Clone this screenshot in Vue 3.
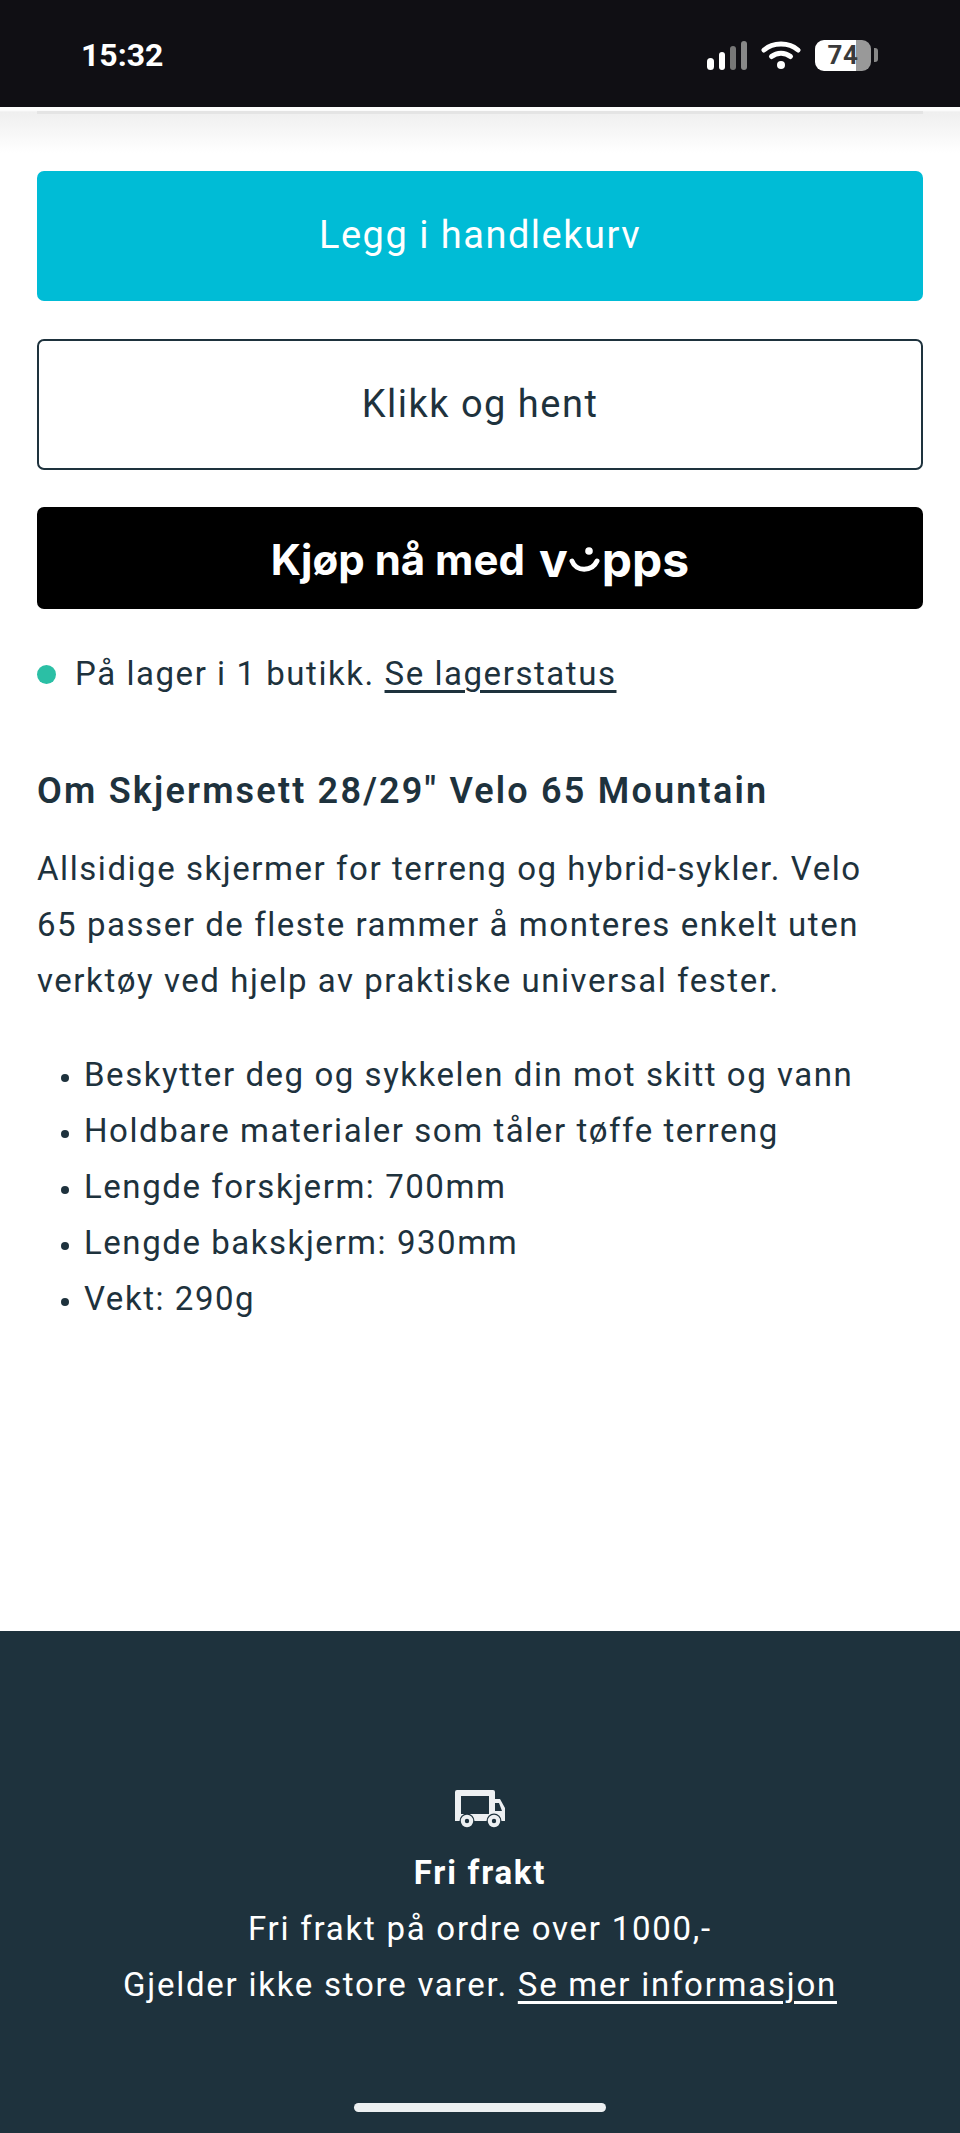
<template>
  <div class="page">
    <header class="status-bar">
      <span class="time">15:32</span>
      <div class="status-icons">
        <svg width="40" height="29" viewBox="0 0 40 29">
          <rect x="0" y="17" width="7" height="12" rx="3.5" fill="#fff" />
          <rect x="12" y="11" width="6" height="18" rx="3" fill="#fff" />
          <rect x="23" y="5" width="6" height="24" rx="3" fill="#777" />
          <rect x="34" y="0" width="6" height="29" rx="3" fill="#888" />
        </svg>
        <svg width="40" height="28" viewBox="0 0 40 28">
          <path d="M3 9C12 1 28 1 37 9" fill="none" stroke="#fff" stroke-width="5" stroke-linecap="round" />
          <path d="M10.5 15.5C16 11 24 11 29.5 15.5" fill="none" stroke="#fff" stroke-width="5" stroke-linecap="round" />
          <circle cx="20" cy="24" r="4" fill="#fff" />
        </svg>
        <div class="battery">
          <div class="battery-body">
            <span>74</span>
          </div>
          <div class="battery-cap"></div>
        </div>
      </div>
    </header>

    <main class="content">
      <button class="btn btn-cart">Legg i handlekurv</button>
      <button class="btn btn-pickup">Klikk og hent</button>
      <button class="btn btn-vipps">
        <span>Kjøp nå med</span>
        <span class="vipps-logo">v<svg class="smile" width="32" height="34" viewBox="0 0 32 34">
          <circle cx="20" cy="8" r="3.8" fill="#fff" />
          <path d="M3 18C7 29 23 29 28 18" fill="none" stroke="#fff" stroke-width="5" stroke-linecap="round" />
        </svg>pps</span>
      </button>

      <p class="stock">
        <span class="dot"></span>
        <span>På lager i 1 butikk. <a href="#">Se lagerstatus</a></span>
      </p>

      <h2 class="title">Om Skjermsett 28/29" Velo 65 Mountain</h2>
      <p class="desc">Allsidige skjermer for terreng og hybrid-sykler. Velo 65 passer de fleste rammer å monteres enkelt uten verktøy ved hjelp av praktiske universal fester.</p>

      <ul class="features">
        <li v-for="item in features" :key="item">{{ item }}</li>
      </ul>
    </main>

    <footer class="footer">
      <svg width="50" height="38" viewBox="0 0 50 38">
        <path fill-rule="evenodd" fill="#edf0f2" d="M2 0H38a2 2 0 0 1 2 2V9H45L50 18V31H0V2A2 2 0 0 1 2 0ZM6 6V24H34V6ZM40 13V21H47L44 13Z" />
        <circle cx="12" cy="31" r="7.5" fill="#1e323d" />
        <circle cx="39" cy="31" r="7.5" fill="#1e323d" />
        <circle cx="12" cy="31" r="4.2" fill="none" stroke="#edf0f2" stroke-width="4" />
        <circle cx="39" cy="31" r="4.2" fill="none" stroke="#edf0f2" stroke-width="4" />
      </svg>
      <strong class="footer-title">Fri frakt</strong>
      <p>Fri frakt på ordre over 1000,-</p>
      <p>Gjelder ikke store varer. <a href="#">Se mer informasjon</a></p>
      <div class="home-bar"></div>
    </footer>
  </div>
</template>

<script setup>
const features = [
  'Beskytter deg og sykkelen din mot skitt og vann',
  'Holdbare materialer som tåler tøffe terreng',
  'Lengde forskjerm: 700mm',
  'Lengde bakskjerm: 930mm',
  'Vekt: 290g'
]
</script>

<style scoped>
.page {
  width: 960px;
  height: 2133px;
  display: flex;
  flex-direction: column;
  background: #fff;
  color: #1e323d;
  font-family: "Roboto", "Liberation Sans", sans-serif;
  font-size: 33px;
  letter-spacing: 1.55px;
  overflow: hidden;
}

.status-bar {
  height: 107px;
  flex: none;
  display: flex;
  justify-content: space-between;
  align-items: center;
  padding: 3px 82px 0 81px;
  box-sizing: border-box;
  background: #100f14;
  position: relative;
}

.status-bar::after {
  content: "";
  position: absolute;
  top: 100%;
  left: 0;
  right: 0;
  height: 46px;
  background: linear-gradient(180deg, #fff 0, #fff 3px, #efefef 5px, #fff 100%);
}

.status-bar::before {
  content: "";
  position: absolute;
  z-index: 1;
  top: 111px;
  left: 37px;
  right: 37px;
  height: 3px;
  background: #e4e4e4;
}

.time {
  color: #fff;
  font-size: 32px;
  line-height: 38px;
  font-weight: 700;
  letter-spacing: 0;
}

.status-icons {
  display: flex;
  align-items: center;
  gap: 14px;
}

.battery {
  display: flex;
  align-items: center;
  gap: 3px;
}

.battery-body {
  width: 56px;
  height: 31px;
  border-radius: 9px;
  background: linear-gradient(90deg, #fff 73%, #999 73%);
  display: flex;
  align-items: center;
  justify-content: center;
}

.battery-body span {
  color: #3a3a3a;
  font-size: 26px;
  font-weight: 700;
  letter-spacing: 0.5px;
}

.battery-cap {
  width: 4px;
  height: 14px;
  border-radius: 0 3px 3px 0;
  background: #888;
}

.content {
  flex: 1;
  padding: 64px 37px 0;
}

.btn {
  display: flex;
  align-items: center;
  justify-content: center;
  width: 100%;
  box-sizing: border-box;
  border-radius: 7px;
  font: inherit;
  font-size: 38px;
  letter-spacing: 1.5px;
  line-height: 44px;
  padding: 0 0 2px;
}

.btn-cart {
  height: 130px;
  border: 0;
  background: #00bcd6;
  color: #fff;
}

.btn-pickup {
  height: 131px;
  margin-top: 38px;
  border: 2px solid #1e323d;
  background: #fff;
  color: #1e323d;
}

.btn-vipps {
  height: 102px;
  margin-top: 37px;
  border: 0;
  gap: 14px;
  padding: 4px 0 0;
  background: #000;
  color: #fff;
  font-family: "Inter", sans-serif;
  font-size: 42px;
  font-weight: 700;
  letter-spacing: 0;
}

.vipps-logo {
  display: flex;
  align-items: center;
  font-size: 48px;
}

.smile {
  margin: 0 1px;
}

.stock {
  display: flex;
  align-items: center;
  gap: 19px;
  margin: 43px 0 0;
  line-height: 44px;
}

.dot {
  width: 19px;
  height: 19px;
  border-radius: 50%;
  background: #2bbfa5;
}

a {
  color: inherit;
  text-decoration: underline;
  text-decoration-thickness: 3px;
  text-underline-offset: 5px;
}

.title {
  margin: 73px 0 0;
  font-size: 36px;
  line-height: 44px;
  font-weight: 600;
  letter-spacing: 2.2px;
}

.desc {
  max-width: 860px;
  margin: 28px 0 0;
  line-height: 56px;
}

.features {
  margin: 38px 0 0;
  padding: 0 0 0 47px;
}

.features li {
  line-height: 56px;
}

.features li::marker {
  font-size: 26px;
}

.footer {
  flex: none;
  height: 502px;
  box-sizing: border-box;
  padding-top: 159px;
  display: flex;
  flex-direction: column;
  align-items: center;
  background: #1e323d;
  color: #fff;
  letter-spacing: 1.75px;
  position: relative;
}

.footer-title {
  margin-top: 17px;
  line-height: 56px;
  font-weight: 700;
}

.footer p {
  margin: 0;
  line-height: 56px;
}

.home-bar {
  position: absolute;
  left: 354px;
  bottom: 21px;
  width: 252px;
  height: 9px;
  border-radius: 5px;
  background: #edf0f2;
}
</style>
